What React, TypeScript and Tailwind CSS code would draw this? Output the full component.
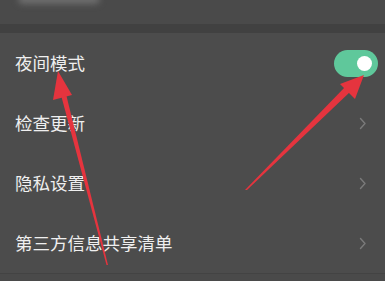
const rows = ["检查更新", "隐私设置", "第三方信息共享清单"];

const Chevron = () => (
  <svg width="8" height="13" viewBox="0 0 8 13" fill="none">
    <path d="M1.5 1.5L6 6.5L1.5 11.5" stroke="#7a7a7a" strokeWidth={1.4} strokeLinecap="round" strokeLinejoin="round" />
  </svg>
);

export default function App() {
  return (
    <div
      className="relative w-[385px] h-[281px] overflow-hidden bg-[#4c4c4c] text-[#efefef]"
      style={{ fontFamily: '"Noto Sans CJK SC", "Noto Sans", sans-serif' }}
    >
      <div className="h-[24px] bg-[#4a4a4a] relative">
        <div className="absolute left-[18px] top-[-6px] w-[82px] h-[10px] rounded-full bg-[#6e6e6e] blur-[3px]" />
      </div>
      <div className="h-[9px] bg-[#414141]" />

      <div className="h-[60px] flex items-center justify-between pl-[15px] pr-[7px]">
        <span className="text-[17.5px] leading-none">夜间模式</span>
        <div className="w-[44px] h-[27px] rounded-full bg-[#5fc89b] flex items-center justify-end pr-[6px]">
          <div className="w-[15px] h-[15px] rounded-full bg-white" />
        </div>
      </div>

      {rows.map((r) => (
        <div key={r} className="h-[60px] flex items-center justify-between pl-[15px] pr-[18px]">
          <span className="text-[17.5px] leading-none">{r}</span>
          <Chevron />
        </div>
      ))}

      <div className="h-[9px] border-t border-[#434343] bg-[#4a4a4a]" />

      {/* red annotation arrows */}
      <svg className="absolute inset-0 pointer-events-none" width="385" height="281" viewBox="0 0 385 281">
        <polygon points="106.5,265 108,265 66,94 61,95" fill="#e5343e" />
        <polygon points="58,71 53,100 72,95" fill="#e5343e" />
        <polygon points="245,190 247,190 351,91 346,86" fill="#e5343e" />
        <polygon points="364,75 340,84 355,99" fill="#e5343e" />
      </svg>
    </div>
  );
}
